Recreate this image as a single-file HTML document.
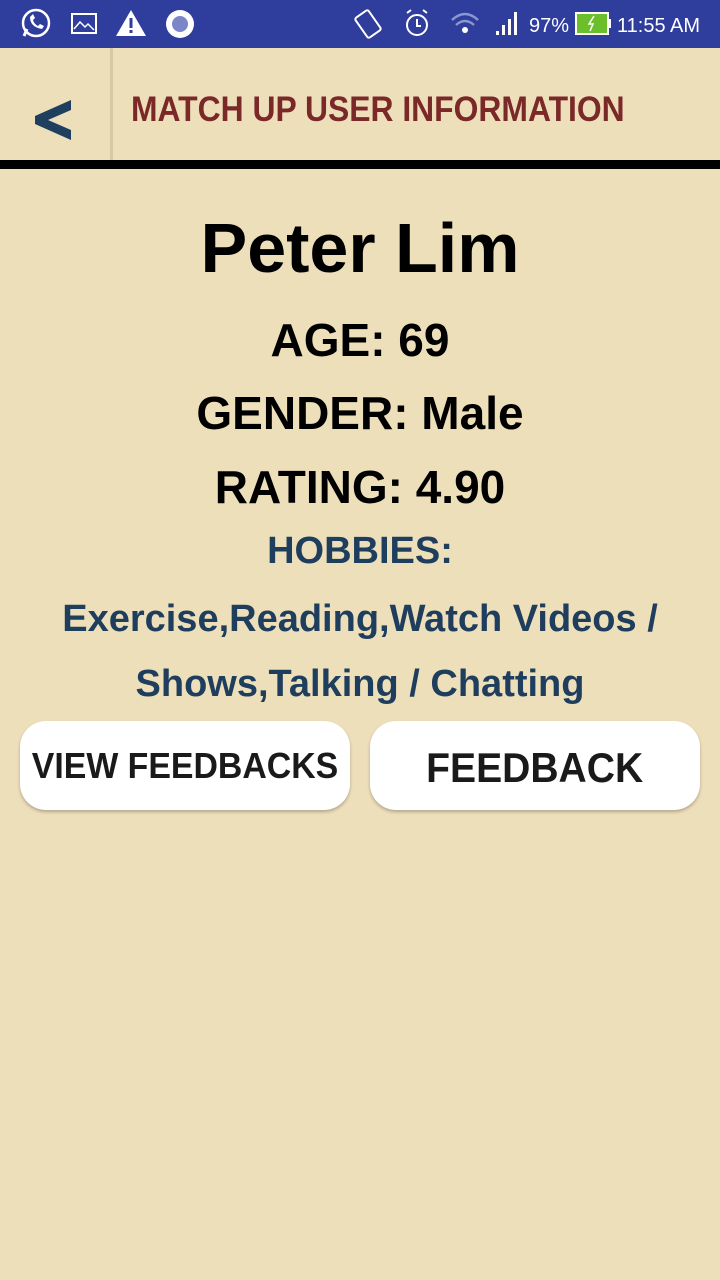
<!DOCTYPE html>
<html><head><meta charset="utf-8"><style>
*{margin:0;padding:0;box-sizing:border-box}
body{width:720px;height:1280px;background:#eedfbb;font-family:"Liberation Sans",sans-serif;overflow:hidden;position:relative}
.sb{position:absolute;top:0;left:0;width:720px;height:48px;background:#2f3d9d;color:#fff}
.hdr{position:absolute;top:48px;left:0;width:720px;height:112px}
.sep{position:absolute;left:110px;top:0;width:3px;height:112px;background:#d8c9a6}
.line{position:absolute;top:160px;left:0;width:720px;height:9px;background:#000}
.title{position:absolute;left:131px;top:42px;color:#7a2828;font-size:35px;font-weight:bold;transform:scaleX(0.91);transform-origin:left center;white-space:nowrap}
.c{position:absolute;left:0;width:720px;text-align:center;font-weight:bold}
.btn{position:absolute;top:721px;width:330px;height:89px;background:#fff;border-radius:26px;box-shadow:0 2px 3px rgba(0,0,0,.25);text-align:center;font-weight:bold;color:#1a1a1a;white-space:nowrap}
.btn span{display:inline-block}
</style></head><body>
<div class="sb">
<svg width="720" height="48" style="position:absolute;left:0;top:0">
<g fill="none" stroke="#fff" stroke-width="2.5"><circle cx="36" cy="23" r="13"/></g>
<path d="M24 36 l3-7" stroke="#fff" stroke-width="3"/>
<path d="M30 17 q0 10 12 12 l2-3 -4-2 -2 2 q-4-2 -5-6 l2-2 -2-4z" fill="#fff"/>
<rect x="72" y="14" width="24" height="19" fill="none" stroke="#fff" stroke-width="2"/>
<path d="M74 29 l6-7 5 5 3-3 6 6" fill="none" stroke="#fff" stroke-width="1.5"/>
<path d="M131 10 l15 26 h-30z" fill="#fff"/><rect x="129.5" y="18" width="3" height="10" fill="#2f3d9d"/><rect x="129.5" y="30" width="3" height="3" fill="#2f3d9d"/>
<circle cx="180" cy="24" r="14" fill="#fff"/><circle cx="180" cy="24" r="8" fill="#7b86c8"/>
<g fill="none" stroke="#fff" stroke-width="2"><rect x="360" y="12" width="16" height="24" rx="2" transform="rotate(-35 368 24)"/><circle cx="417" cy="25" r="10"/><path d="M417 19v7h4M407 13l4-3M427 13l-4-3"/></g>
<path d="M452 20 q13-12 26 0 M456 25 q9-8 18 0" stroke="#8c96cf" stroke-width="2.5" fill="none"/><circle cx="465" cy="30" r="3" fill="#fff"/>
<g fill="#fff"><rect x="496" y="31" width="3" height="4"/><rect x="502" y="25" width="3" height="10"/><rect x="508" y="19" width="3" height="16"/><rect x="514" y="12" width="3" height="23"/></g>
<rect x="576" y="13" width="32" height="21" fill="#6abf2a" stroke="#fff" stroke-width="2"/><rect x="608" y="19" width="3" height="9" fill="#fff"/>
<path d="M594 16 l-5 8 h4 l-3 7" stroke="#fff" stroke-width="1.5" fill="none"/>
<text x="529" y="32" fill="#fff" font-size="20">97%</text>
<text x="617" y="32" fill="#fff" font-size="20">11:55 AM</text>
</svg></div>
<div class="hdr">
<svg width="110" height="112" style="position:absolute;left:0;top:0"><path d="M71 52 L35 68 V76 L71 92 V82 L48 72 L71 62Z" fill="#1f3f5e"/></svg>
<div class="sep"></div><div class="title">MATCH UP USER INFORMATION</div></div>
<div class="line"></div>
<div class="c" style="top:208px;font-size:70px;color:#000">Peter Lim</div>
<div class="c" style="top:313px;font-size:46px;color:#000">AGE: 69</div>
<div class="c" style="top:386px;font-size:46px;color:#000">GENDER: Male</div>
<div class="c" style="top:460px;font-size:46px;color:#000">RATING: 4.90</div>
<div class="c" style="top:530px;font-size:38px;color:#1f3e5d">HOBBIES:</div>
<div class="c" style="top:587px;font-size:38px;color:#1f3e5d;line-height:65px">Exercise,Reading,Watch Videos /<br>Shows,Talking / Chatting</div>
<div class="btn" style="left:20px;font-size:36px;line-height:89px"><span style="transform:scaleX(0.94)">VIEW FEEDBACKS</span></div>
<div class="btn" style="left:370px;font-size:42px;line-height:93px"><span style="transform:scaleX(0.93)">FEEDBACK</span></div>
</body></html>
